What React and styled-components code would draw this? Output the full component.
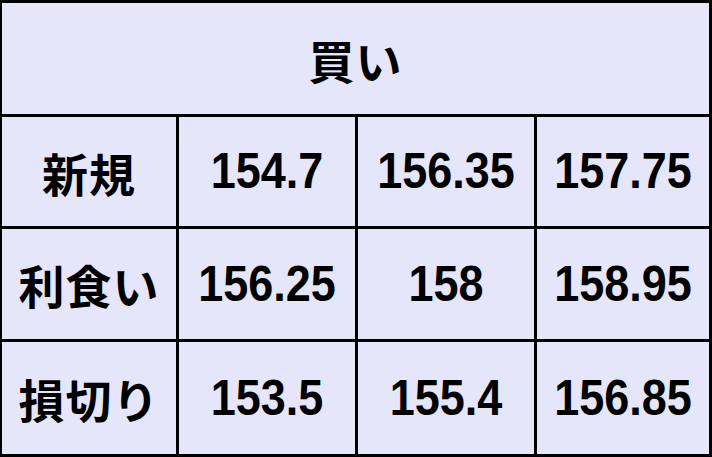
import React from "react";
import styled, { createGlobalStyle } from "styled-components";

const Global = createGlobalStyle`
  html, body { margin: 0; padding: 0; background: #ffffff; }
  body { font-family: "Liberation Sans", Arial, sans-serif; }
`;

const Table = styled.div`
  box-sizing: border-box;
  width: 712px;
  height: 457px;
  display: grid;
  grid-template-columns: 174px 176px 176px 172px;
  grid-template-rows: 111px 109px 110px 112px;
  gap: 3px;
  padding: 3px 3px 3px 2px;
  background: #000000;
`;

const Cell = styled.div`
  background: #e6e6fa;
  display: flex;
  align-items: center;
  justify-content: center;
  grid-column: ${(p) => (p.$span ? `span ${p.$span}` : "auto")};
  color: #000000;
  font-weight: 700;
  font-family: ${(p) =>
    p.$jp
      ? `"Noto Sans CJK JP", "Noto Sans", sans-serif`
      : `"Liberation Sans", Arial, sans-serif`};
  font-size: ${(p) => (p.$jp ? "46px" : "45px")};
  line-height: 1;
`;

const Text = styled.span`
  display: inline-block;
  transform: scaleY(${(p) => (p.$jp ? 1.0 : 1.09)});
  letter-spacing: ${(p) => (p.$jp ? "1px" : "0")};
`;

const rows = [
  ["新規", "154.7", "156.35", "157.75"],
  ["利食い", "156.25", "158", "158.95"],
  ["損切り", "153.5", "155.4", "156.85"],
];

export default function App() {
  return (
    <>
      <Global />
      <Table>
        <Cell $span={4} $jp>
          <Text $jp>買い</Text>
        </Cell>
        {rows.map((r) =>
          r.map((v, i) => (
            <Cell key={r[0] + i} $jp={i === 0}>
              <Text $jp={i === 0}>{v}</Text>
            </Cell>
          ))
        )}
      </Table>
    </>
  );
}
